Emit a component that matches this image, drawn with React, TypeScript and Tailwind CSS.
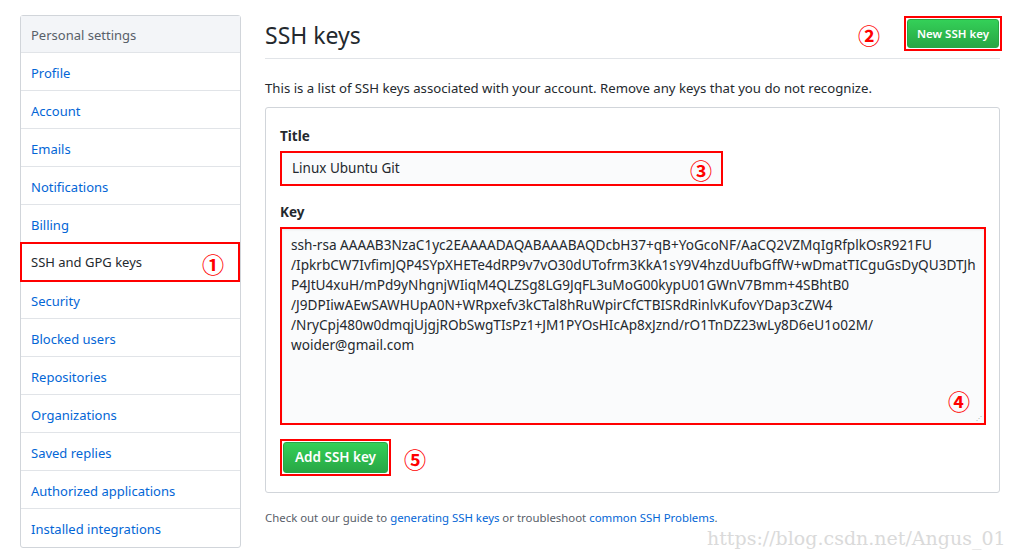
import React from "react";

const nav = [
  "Profile",
  "Account",
  "Emails",
  "Notifications",
  "Billing",
  "SSH and GPG keys",
  "Security",
  "Blocked users",
  "Repositories",
  "Organizations",
  "Saved replies",
  "Authorized applications",
  "Installed integrations",
];

const keyLines = [
  "ssh-rsa AAAAB3NzaC1yc2EAAAADAQABAAABAQDcbH37+qB+YoGcoNF/AaCQ2VZMqIgRfplkOsR921FU",
  "/IpkrbCW7IvfimJQP4SYpXHETe4dRP9v7vO30dUTofrm3KkA1sY9V4hzdUufbGffW+wDmatTICguGsDyQU3DTJh",
  "P4JtU4xuH/mPd9yNhgnjWIiqM4QLZSg8LG9JqFL3uMoG00kypU01GWnV7Bmm+4SBhtB0",
  "/J9DPIiwAEwSAWHUpA0N+WRpxefv3kCTal8hRuWpirCfCTBISRdRinlvKufovYDap3cZW4",
  "/NryCpj480w0dmqjUjgjRObSwgTIsPz1+JM1PYOsHIcAp8xJznd/rO1TnDZ23wLy8D6eU1o02M/",
  "woider@gmail.com",
];

function Circ({ n }: { n: string }) {
  return (
    <span className="text-[#ff0000] text-[22px] leading-none font-bold font-['Noto_Sans_CJK_SC',sans-serif]">
      {n}
    </span>
  );
}

export default function App() {
  return (
    <div className="w-[1019px] h-[558px] bg-white relative overflow-hidden font-['Noto_Sans','Open_Sans',sans-serif] text-[#24292e]">
      <div className="flex pt-[15px] pl-[20px]">
        {/* Sidebar */}
        <div className="w-[221px] border border-[#d1d5da] rounded-[3px] self-start">
          <div className="h-[37px] bg-[#f3f5f8] border-b border-[#e1e4e8] flex items-center pt-[4px] px-[10px] text-[13px] text-[#586069]">
            Personal settings
          </div>
          {nav.map((item, i) => {
            const active = item === "SSH and GPG keys";
            const last = i === nav.length - 1;
            if (active) {
              return (
                <div
                  key={item}
                  className="h-[40px] -my-[1px] relative z-10 border-2 border-[#ff0000] -ml-[1px] flex items-center justify-between pt-[2px] pl-[9px] pr-[14px] text-[13px] text-[#24292e] bg-white"
                >
                  <span>{item}</span>
                  <Circ n="①" />
                </div>
              );
            }
            return (
              <div
                key={item}
                className={`h-[38px] flex items-center pt-[4px] px-[10px] text-[13px] text-[#0366d6] ${last ? "" : "border-b border-[#e1e4e8]"}`}
              >
                {item}
              </div>
            );
          })}
        </div>

        {/* Main */}
        <div className="ml-[24px] w-[735px]">
          <div className="flex items-center justify-between h-[44px] border-b border-[#e1e4e8]">
            <div className="text-[23px] leading-none pb-[2px]">SSH keys</div>
            <div className="flex items-center gap-[24px] -mt-[6px]">
              <Circ n="②" />
              <div className="border-2 border-[#ff0000] p-px -mr-[2px]">
                <div className="h-[29px] w-[92px] justify-center flex items-center rounded-[3px] text-white text-[11.5px] font-semibold bg-gradient-to-b from-[#34d058] to-[#28a745] border border-[#28a745]">
                  New SSH key
                </div>
              </div>
            </div>
          </div>

          <p className="mt-[19px] text-[13.2px] leading-[20px]">
            This is a list of SSH keys associated with your account. Remove any keys that you do not recognize.
          </p>

          <div className="mt-[9px] border border-[#d1d5da] rounded-[3px] px-[14px] pt-[18px] pb-[16px]">
            <div className="text-[13.5px] font-bold leading-[20px]">Title</div>
            <div className="mt-[5px] w-[443px] h-[35px] border-2 border-[#ff0000] bg-[#fafbfc] flex items-center justify-between pl-[10px] pr-[9px] text-[13.5px]">
              <span>Linux Ubuntu Git</span>
              <Circ n="③" />
            </div>

            <div className="mt-[16px] text-[13.5px] font-bold leading-[20px]">Key</div>
            <div className="mt-[5px] w-[706px] h-[198px] border-2 border-[#ff0000] bg-[#fafbfc] relative pl-[9px] pt-[6px] text-[13.6px] leading-[20px] shadow-[inset_0_1px_2px_rgba(27,31,35,0.075)]">
              {keyLines.map((l) => (
                <div key={l} className="whitespace-pre">
                  {l}
                </div>
              ))}
              <div className="absolute right-[14px] bottom-[8px]">
                <Circ n="④" />
              </div>
              <div className="absolute right-[2px] bottom-[2px] text-[#999] text-[6px] leading-none">⋰</div>
            </div>

            <div className="mt-[14px] flex items-center gap-[13px]">
              <div className="border-2 border-[#ff0000] p-px">
                <div className="h-[31px] w-[105px] justify-center flex items-center rounded-[3px] text-white text-[13.5px] font-semibold bg-gradient-to-b from-[#34d058] to-[#28a745] border border-[#28a745]">
                  Add SSH key
                </div>
              </div>
              <Circ n="⑤" />
            </div>
          </div>

          <p className="mt-[16px] text-[11.4px] text-[#586069]">
            Check out our guide to <span className="text-[#0366d6]">generating SSH keys</span> or troubleshoot{" "}
            <span className="text-[#0366d6]">common SSH Problems</span>.
          </p>
        </div>
      </div>

      <div className="absolute left-[707px] top-[524px] text-[19px] leading-[28px] text-[#dadada] font-['DejaVu_Serif','Liberation_Serif',serif]">
        https://blog.csdn.net/Angus_01
      </div>
    </div>
  );
}
